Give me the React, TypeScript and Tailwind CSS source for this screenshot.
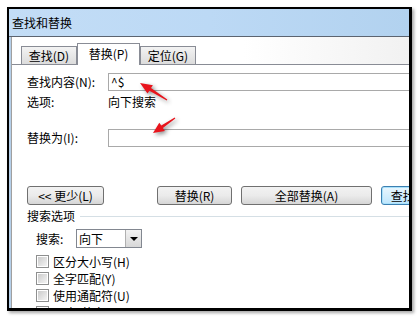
import React from 'react';

const font = { fontFamily: '"Noto Sans CJK SC", "Liberation Sans", sans-serif' };

const Tab = ({ label, active }: { label: string; active?: boolean }) =>
  active ? (
    <div className="relative z-10 -mb-px flex h-[22px] w-[63px] items-start justify-center border border-b-0 border-[#898c95] bg-white pt-[3px] text-[12px] leading-[14px] text-black">
      {label}
    </div>
  ) : (
    <div className="flex h-[18px] w-[56px] items-center justify-center border border-b-0 border-[#898c95] bg-gradient-to-b from-[#f3f3f3] to-[#dcdcdc] text-[12px] leading-none text-black">
      {label}
    </div>
  );

const Btn = ({ label, w, focus, className = '' }: { label: string; w: string; focus?: boolean; className?: string }) => (
  <div
    className={`flex h-[19px] shrink-0 items-center justify-center rounded-[3px] border text-[12px] leading-none text-black whitespace-nowrap ${w} ${className} ${
      focus
        ? 'border-[#3c7fb1] bg-gradient-to-b from-[#eaf6fd] to-[#bee6fd] shadow-[inset_0_0_0_1px_#a8e1fb]'
        : 'border-[#707070] bg-gradient-to-b from-[#f2f2f2] via-[#ebebeb] to-[#d6d6d6]'
    }`}
  >
    {label}
  </div>
);

const Check = ({ label }: { label: string }) => (
  <div className="flex h-[17px] shrink-0 items-center">
    <div className="h-[13px] w-[13px] shrink-0 border border-[#8e8f8f] bg-white p-px">
      <div className="h-full w-full bg-gradient-to-br from-[#cbcbcb] to-[#f4f4f4]" />
    </div>
    <span className="ml-[4px] text-[12px] leading-none text-black">{label}</span>
  </div>
);

export default function App() {
  return (
    <div className="relative h-[318px] w-[418px] overflow-hidden bg-white" style={font}>
      <div className="ml-[7px] mt-[7px] flex h-[304px] w-[405px] flex-col overflow-hidden border-2 border-b-[3px] border-r-[3px] border-black bg-white shadow-[2px_2px_3px_rgba(0,0,0,0.35)]">
        {/* title bar */}
        <div className="flex h-[28px] shrink-0 items-center border-b border-[#5c6470] bg-gradient-to-r from-[#c3ddf6] via-[#bcd9f5] to-[#b2d2ef] pl-[3px] text-[12px] leading-none text-black">
          查找和替换
        </div>

        <div className="flex flex-1">
          <div className="w-[2px] shrink-0 bg-[#b5cfe9]" />
          <div className="flex flex-1 flex-col border-l border-[#a0a0a0]">
            {/* tabs */}
            <div className="flex h-[28px] shrink-0 items-end border-b border-[#898c95] bg-gradient-to-r from-white via-white to-[#ececec] pl-[9px]">
              <Tab label="查找(D)" />
              <Tab label="替换(P)" active />
              <Tab label="定位(G)" />
            </div>

            {/* panel */}
            <div className="flex flex-1 flex-col pl-[15px] pt-[8px] text-[12px] text-black">
              <div className="flex h-[18px] items-center">
                <span className="w-[81px] shrink-0 leading-none">查找内容(N):</span>
                <div className="flex h-[18px] w-[320px] shrink-0 items-center border border-[#a9a9a9] pl-[2px] leading-none">^$</div>
              </div>
              <div className="mt-[2px] flex h-[18px] items-center">
                <span className="w-[81px] shrink-0 leading-none">选项:</span>
                <span className="leading-none">向下搜索</span>
              </div>
              <div className="mt-[18px] flex h-[18px] items-center">
                <span className="w-[81px] shrink-0 leading-none">替换为(I):</span>
                <div className="h-[18px] w-[320px] shrink-0 border border-[#a9a9a9]" />
              </div>

              {/* buttons */}
              <div className="mt-[39px] flex">
                <Btn label="<< 更少(L)" w="w-[77px]" />
                <Btn label="替换(R)" w="w-[75px]" className="ml-[53px]" />
                <Btn label="全部替换(A)" w="w-[131px]" className="ml-[9px]" />
                <Btn label="查找下一处(F)" w="w-[94px]" className="ml-[9px]" focus />
              </div>

              {/* search options */}
              <div className="mt-[2px] flex h-[18px] items-center">
                <span className="shrink-0 leading-none">搜索选项</span>
                <div className="ml-[5px] h-px flex-1 bg-[#d5dfe5]" />
              </div>
              <div className="mt-[4px] flex h-[19px] items-center pl-[9px]">
                <span className="w-[40px] shrink-0 leading-none">搜索:</span>
                <div className="flex h-[19px] w-[66px] items-center border border-[#828790] bg-white">
                  <span className="flex-1 pl-[2px] leading-none">向下</span>
                  <div className="flex h-[17px] w-[16px] items-center justify-center border-l border-[#b0b0b0] bg-gradient-to-b from-[#f2f2f2] to-[#d8d8d8]">
                    <div className="h-0 w-0 border-x-[4px] border-t-[4px] border-x-transparent border-t-black" />
                  </div>
                </div>
              </div>
              <div className="mt-[5px] flex flex-col pl-[9px]">
                <Check label="区分大小写(H)" />
                <Check label="全字匹配(Y)" />
                <Check label="使用通配符(U)" />
                <Check label="同音(英文)(K)" />
              </div>
            </div>
          </div>
        </div>
      </div>

      {/* red annotation arrows */}
      <svg
        className="pointer-events-none absolute left-0 top-0"
        width="418"
        height="318"
        style={{ filter: 'drop-shadow(2px 2px 2px rgba(0,0,0,0.45))' }}
      >
        <polygon
          fill="#e8141c"
          points="140,83 152.9,85.2 151,88.1 167.3,99.6 166.7,100.4 149.4,90.7 147.5,93.6"
        />
        <polygon
          fill="#e8141c"
          points="153,133 159.3,122.7 161.3,125.6 174.7,117.6 175.3,118.4 162.9,128 164.9,130.9"
        />
      </svg>
    </div>
  );
}
